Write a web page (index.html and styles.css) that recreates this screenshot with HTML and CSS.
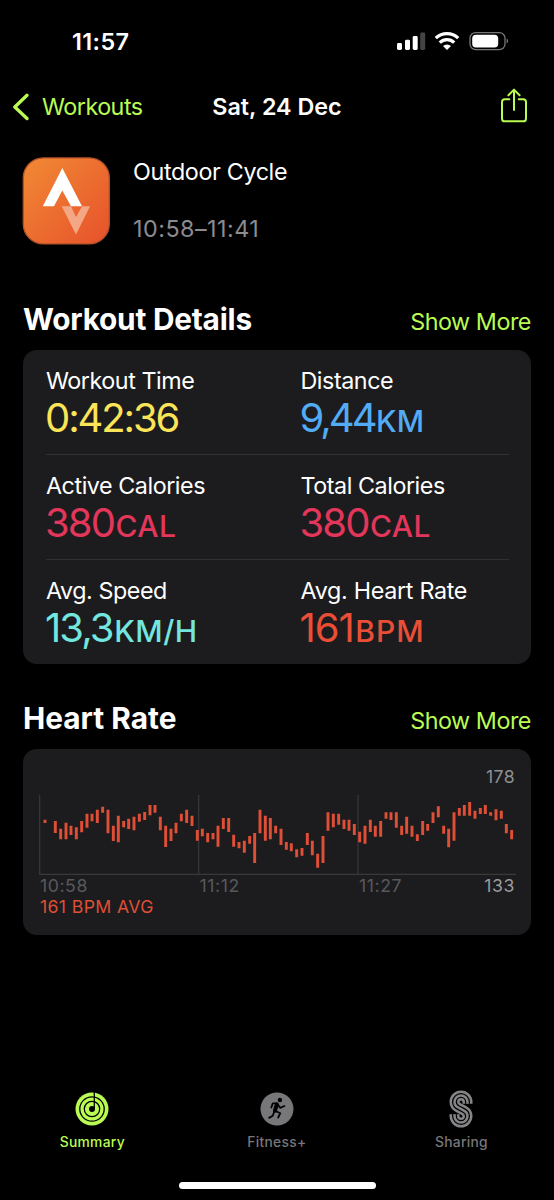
FILE: index.html
```
<!DOCTYPE html>
<html lang="en">
<head>
<meta charset="utf-8">
<title>Workout</title>
<link rel="stylesheet" href="styles.css">
</head>
<body>
<div class="screen">
  <div class="status">
    <span class="clock">11:57</span>
    <svg class="status-icons" width="112" height="20" viewBox="397 31 112 20">
      <g fill="#fff">
        <rect x="397" y="43" width="5" height="7" rx="1.4"/>
        <rect x="405" y="39.7" width="5" height="10.3" rx="1.4"/>
        <rect x="412.7" y="36" width="5" height="14" rx="1.4"/>
        <rect x="420.2" y="32.5" width="5" height="17.5" rx="1.4" fill="#444"/>
        <path d="M447 50l-4-4a5.8 5.8 0 0 1 8 0z"/>
      </g>
      <path d="M435.8 38.1a16 16 0 0 1 22.4 0M439.8 42.6a10.2 10.2 0 0 1 14.4 0" fill="none" stroke="#fff" stroke-width="3.2"/>
      <rect x="470" y="32.6" width="35" height="17" rx="5.6" fill="none" stroke="#777" stroke-width="1.3"/>
      <rect x="472.2" y="34.7" width="26" height="12.8" rx="3.8" fill="#fff"/>
      <path d="M506.6 38.6v5q1.5-.6 1.5-2.5t-1.5-2.5z" fill="#777"/>
    </svg>
  </div>

  <div class="nav">
    <div class="back">
      <svg width="17" height="28" viewBox="0 0 17 28"><path d="M15 2.3L2.8 14 15 25.500" fill="none" stroke="#b9fb52" stroke-width="3.3" stroke-linecap="round" stroke-linejoin="round"/></svg>
      <span>Workouts</span>
    </div>
    <div class="nav-title">Sat, 24 Dec</div>
    <svg class="share" width="28" height="36" viewBox="0 0 28 36"><path d="M9.3 11.2H4.8Q2 11.2 2 14v16.400q0 2.900 2.800 2.900h18.400q2.800 0 2.800-2.900V14q0-2.800-2.800-2.800h-4.500M14 22V2M8.400 7.200L14 1.600l5.600 5.600" fill="none" stroke="#b9fb52" stroke-width="2" stroke-linecap="round" stroke-linejoin="round"/></svg>
  </div>

  <div class="workout">
    <svg class="app-icon" width="88" height="88" viewBox="0 0 88 88">
      <defs><linearGradient id="orange" x1="0" y1="0" x2="1" y2="1"><stop offset="0" stop-color="#f18a34"/><stop offset="1" stop-color="#e7512b"/></linearGradient></defs>
      <rect x="1.300" y=".9" width="86" height="86" rx="20" fill="url(#orange)" stroke="#b35229" stroke-width="1.300"/>
      <path d="M40.300 11L60 49.300H49L40.300 33.500 32 49.300H20.800z" fill="#fff"/>
      <path d="M39.700 49.300H49L54 60 60 49.300h8L54 77.500z" fill="#f4a785"/>
    </svg>
    <div class="workout-text">
      <div class="workout-name">Outdoor Cycle</div>
      <div class="workout-span">10:58–11:41</div>
    </div>
  </div>

  <div class="section-head">
    <h2>Workout Details</h2><span class="more">Show More</span>
  </div>
  <div class="card details">
    <div class="row">
      <div class="metric"><div class="label">Workout Time</div><div class="value yellow time">0:42:36</div></div>
      <div class="metric"><div class="label">Distance</div><div class="value blue distance">9,44<span class="unit">KM</span></div></div>
    </div>
    <div class="row">
      <div class="metric"><div class="label">Active Calories</div><div class="value pink">380<span class="unit">CAL</span></div></div>
      <div class="metric"><div class="label">Total Calories</div><div class="value pink">380<span class="unit">CAL</span></div></div>
    </div>
    <div class="row">
      <div class="metric"><div class="label">Avg. Speed</div><div class="value cyan">13,3<span class="unit">KM/H</span></div></div>
      <div class="metric"><div class="label rate-label">Avg. Heart Rate</div><div class="value red rate">161<span class="unit">BPM</span></div></div>
    </div>
  </div>

  <div class="section-head second">
    <h2 class="h-heart">Heart Rate</h2><span class="more">Show More</span>
  </div>
  <div class="card heart">
    <div class="max">178</div>
    <svg class="chart" width="477" height="80" viewBox="57 45 1431 240">
      <path d="M59 45V285M536 45V285M1014 45V285M57 283H1488" stroke="#39393b" stroke-width="3.500"/>
      <path d="M75 119V129M106 123V159M122 146V178M138 128V178M153 137V165M169 142V178M185 123V157M201 101V143M216 101V124M232 89V129M248 80V98M264 89V160M280 137V183M295 107V187M311 123V142M326 116V147M342 110V151M358 101V125M374 96V120M390 75V106M405 75V98M421 110V151M437 137V201M453 146V183M468 128V160M484 101V124M500 89V129M516 107V138M532 150V182M547 146V169M563 159V187M579 159V178M594 137V200M610 114V147M626 114V156M641 164V200M657 186V205M673 182V218M689 168V191M704 159V249M720 89V160M736 107V182M751 114V178M767 137V160M783 146V195M799 186V209M814 190V214M830 208V232M846 204V227M862 159V195M877 182V226M893 221V263M909 168V249M924 97V152M940 101V142M956 101V134M972 119V147M987 119V152M1003 132V165M1019 155V187M1035 137V191M1051 119V156M1066 137V170M1082 123V170M1098 97V116M1113 97V120M1129 97V143M1145 137V165M1160 110V161M1176 137V170M1192 163V183M1208 123V165M1223 132V152M1239 97V129M1255 79V112M1271 137V161M1286 146V202M1302 97V182M1318 84V107M1333 75V107M1349 66V107M1365 92V116M1381 84V102M1396 75V102M1412 97V107M1428 88V121M1444 92V116M1459 132V160M1475 150V178" stroke="#df4f36" stroke-width="8.800"/>
    </svg>
    <div class="axis"><span>10:58</span><span>11:12</span><span>11:27</span><span class="min">133</span></div>
    <div class="avg">161 BPM AVG</div>
  </div>

  <div class="tabs">
    <div class="tab active">
      <svg width="36" height="38" viewBox="0 0 36 38">
        <circle cx="18" cy="19" r="16.500" fill="#b9fb52"/>
        <g fill="none" stroke="#000" stroke-width="1.300"><circle cx="18" cy="19" r="12.200"/><circle cx="18" cy="19" r="7.700"/><path d="M20.300 2v17"/></g>
        <circle cx="18" cy="19" r="3" fill="#000"/>
      </svg>
      <span>Summary</span>
    </div>
    <div class="tab">
      <svg width="36" height="38" viewBox="0 0 36 38">
        <circle cx="18" cy="19" r="16.500" fill="#77777a"/>
        <circle cx="20.900" cy="10" r="2.200"/>
        <g fill="none" stroke="#000" stroke-linecap="round" stroke-linejoin="round"><path d="M17.800 14.500l-1.900 6.300" stroke-width="4"/><path d="M18 13.300l-4.200.1-1.500 4.100M18.800 14.500l2.300 3.300 4.300-1.800M17 21.300l4.300 1.900-2.100 4.300M15.300 21.500l-1.600 4.300-3.600 2.100" stroke-width="1.800"/></g>
      </svg>
      <span>Fitness+</span>
    </div>
    <div class="tab">
      <svg width="36" height="38" viewBox="-6.500 0 36 38">
        <g fill="none">
          <path class="s-outer" d="M18 13.800V12A6.500 6.500 0 0 0 5 12C5 15.200 6.800 16.600 9 17.700L14 20.300C16.200 21.400 18 22.800 18 26A6.500 6.500 0 0 1 5 26V24.200"/>
          <path class="s-gap" d="M18 13.800V12A6.500 6.500 0 0 0 5 12C5 15.200 6.800 16.600 9 17.700L14 20.300C16.200 21.400 18 22.800 18 26A6.500 6.500 0 0 1 5 26V24.200"/>
          <path class="s-inner" d="M18 13.800V12A6.500 6.500 0 0 0 5 12C5 15.200 6.800 16.600 9 17.700L14 20.300C16.200 21.400 18 22.800 18 26A6.500 6.500 0 0 1 5 26V24.200"/>
        </g>
      </svg>
      <span>Sharing</span>
    </div>
  </div>
  <div class="home"></div>
</div>
</body>
</html>
```
FILE: styles.css
```
* { box-sizing: border-box; }
body { margin: 0; background: #000; color: #fff; font-family: Inter, "Liberation Sans", sans-serif; white-space: nowrap; }
svg { display: block; flex: none; }
.screen { width: 554px; height: 1200px; display: flex; flex-direction: column; overflow: hidden; }

.status { height: 60px; padding: 31px 45px 0 72px; display: flex; justify-content: space-between; }
.clock { font-size: 23.400px; font-weight: 600; line-height: 21px; letter-spacing: .4px; }

.nav { height: 97px; padding: 28px 12px 0; display: grid; grid-template-columns: 1fr auto 1fr; }
.back { display: flex; color: #b9fb52; gap: 13px; font-size: 23.300px; line-height: 37px; letter-spacing: -.5px; }
.back svg { margin-top: 5px; }
.nav-title { font-size: 23.300px; font-weight: 600; line-height: 37px; letter-spacing: 0; }
.share { justify-self: end; margin-right: 14px; }

.workout { height: 143px; padding-left: 22px; display: flex; gap: 23px; }
.workout-text { font-size: 23.300px; line-height: 30px; display: flex; flex-direction: column; gap: 27px; letter-spacing: -.35px; }
.workout-span { color: #8b8b90; letter-spacing: .5px; }

.section-head { height: 50px; padding: 1px 23px 0; display: flex; justify-content: space-between; }
h2 { margin: 0; font-size: 29.800px; line-height: 36px; font-weight: 700; letter-spacing: -.22px; }
.h-heart { letter-spacing: 0; }
.more { color: #b9fb52; font-size: 23.300px; line-height: 42px; letter-spacing: -.45px; }
.second { margin-top: 35px; }

.card { margin: 0 23px; background: #1c1c1e; border-radius: 14px; }
.details { height: 314px; padding: 0 22px 0 23px; }
.row { height: 104px; padding-top: 17px; display: grid; grid-template-columns: 254.500px 1fr; }
.row + .row { height: 105px; border-top: 1px solid #303032; }
.label { font-size: 23.300px; line-height: 28px; letter-spacing: -.45px; }
.rate-label { letter-spacing: -.3px; }
.value { margin: 3px 0 0 -1px; font-size: 40px; line-height: 40px; letter-spacing: -1.900px; }
.unit { font-size: 30px; font-weight: 500; letter-spacing: .5px; margin-left: 1.500px; }
.time { letter-spacing: -2.100px; }
.distance { letter-spacing: -3px; }
.distance .unit { letter-spacing: .2px; }
.rate { letter-spacing: -1px; }
.rate .unit { letter-spacing: 1px; }
.yellow { color: #fbe457; }
.blue { color: #53abf4; }
.pink { color: #e2365a; }
.cyan { color: #72e6df; }
.red { color: #ea4e36; }

.heart { height: 186px; padding: 18px 15px 0 16px; font-size: 17.700px; line-height: 20px; }
.max { text-align: right; padding-right: 1px; color: #8f8f94; letter-spacing: .4px; }
.chart { margin-top: 8px; }
.axis { padding: 1px 0 0 1px; display: grid; grid-template-columns: 159.500px 159.500px 1fr auto; color: #58585c; letter-spacing: .55px; }
.min { color: #9a9a9f; padding-right: 1px; }
.avg { margin: 1px 0 0 1px; color: #df4f36; letter-spacing: .35px; }

.tabs { margin-top: 155px; height: 92px; display: grid; grid-template-columns: 184.600px 184.600px 184.600px; font-size: 13.800px; font-weight: 500; line-height: 20px; color: #77777a; }
.tab { display: flex; flex-direction: column; align-items: center; gap: 4px; letter-spacing: .3px; }
.active { color: #b9fb52; }
.s-outer { stroke: #858588; stroke-width: 10px; }
.s-gap { stroke: #000; stroke-width: 5px; }
.s-inner { stroke: #858588; stroke-width: 2.500px; }
.home { width: 197px; height: 7px; margin: 0 auto; border-radius: 4px; background: #fff; }
```
